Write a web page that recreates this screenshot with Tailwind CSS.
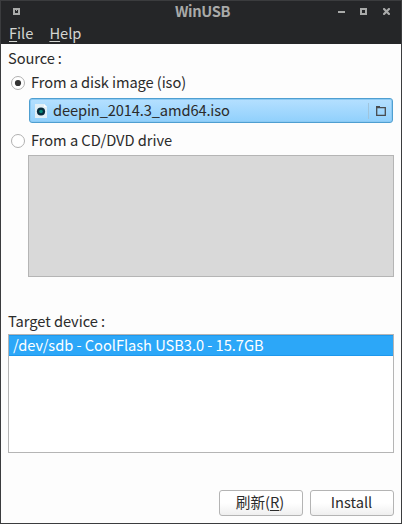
<!DOCTYPE html>
<html lang="zh-CN">
<head>
<meta charset="utf-8">
<title>WinUSB</title>
<script src="https://cdn.jsdelivr.net/npm/@tailwindcss/browser@4"></script>
</head>
<body class="overflow-hidden">
<div class="flex h-[524px] w-[402px] flex-col border border-[#3b3c3e] bg-[#fdfdfd] font-['Noto_Sans_CJK_SC',sans-serif] text-[14.67px] leading-[24px] whitespace-nowrap text-[#2b2b2b]">
  <header class="h-[43px] shrink-0 bg-[#252628]">
    <div class="flex h-[21px] items-center pl-3 pr-[11px]">
      <svg class="h-[7px] w-[7px] shrink-0" viewBox="0 0 7 7" shape-rendering="crispEdges"><path fill="#aaabaa" fill-rule="evenodd" d="M0 0h7v7H0zM2 2v3h3V2H4v1H3V2z"/></svg>
      <h1 class="ml-[155px] h-[21px] w-[60px] text-[14.67px] leading-[19px] font-bold tracking-[-0.35px] text-[#a9aaa9]">WinUSB</h1>
      <div class="ml-auto flex items-center">
        <svg class="h-[7px] w-[7px]" viewBox="0 0 7 7" shape-rendering="crispEdges"><path fill="#a9aaa9" d="M0 3h7v2H0z"/></svg>
        <svg class="ml-[15px] h-[7px] w-[7px]" viewBox="0 0 7 7" shape-rendering="crispEdges"><path fill="#a9aaa9" fill-rule="evenodd" d="M0 0h7v7H0zM2 2v3h3V2z"/></svg>
        <svg class="ml-4 h-[7px] w-[7px]" viewBox="0 0 7 7"><path stroke="#a9aaa9" stroke-width="2.2" d="M.3.3l6.4 6.4M6.7.3L.3 6.7"/></svg>
      </div>
    </div>
    <nav class="flex h-[22px] gap-4 pl-2 leading-[22px] text-[#d4d6d2]">
      <span><u class="underline-offset-2">F</u>ile</span><span><u class="underline-offset-2">H</u>elp</span>
    </nav>
  </header>
  <main class="flex flex-1 flex-col px-[7px]">
    <div class="mt-[2px] h-6 tracking-[-0.1px]">Source :</div>
    <label class="flex h-[25px] items-center pl-[3px] leading-[22px] tracking-[-0.08px]">
      <svg class="mr-[6px] h-[14px] w-[14px]" viewBox="0 0 14 14"><circle cx="7" cy="7" r="6.5" fill="#fff" stroke="#b0b0b0"/><circle cx="7" cy="7" r="3.1" fill="#333"/></svg><span class="h-6">From a disk image (iso)</span>
    </label>
    <div class="mt-[3px] ml-[21px] flex h-[25px] w-[364px] items-center rounded-[3px] border border-[#4f9fd1] bg-linear-to-b from-[#b5e0ff] to-[#90d0fc] pl-[5px] pr-[6px] shadow-[inset_0_0_0_1px_#8ccaf3]">
      <svg class="mr-[6px] h-[14px] w-[12px]" viewBox="0 0 12 14"><path fill="#e2eff6" d="M0 0h9l3 3v11H0z"/><path fill="#fff" d="M9 0v3h3z"/><circle cx="6" cy="7.5" r="4.1" fill="#092b3c"/><circle cx="6" cy="7.5" r="1.8" fill="#078a78"/></svg>
      <span class="h-6 leading-[21px] tracking-[-0.12px]">deepin_2014.3_amd64.iso</span>
      <span class="ml-auto h-4 w-px bg-[#9fc4dc]"></span>
      <svg class="ml-[7px] h-[10px] w-[10px]" viewBox="0 0 10 10"><path fill="none" stroke="#484b4e" stroke-width="1.3" d="M.7 1.7h8.6v7.6H.7z"/><path fill="#484b4e" d="M0 0h4v2H0z"/></svg>
    </div>
    <label class="mt-[5px] flex h-[25px] items-center pl-[3px] leading-[22px]">
      <svg class="mr-[6px] h-[14px] w-[14px]" viewBox="0 0 14 14"><circle cx="7" cy="7" r="6.5" fill="#fff" stroke="#b0b0b0"/></svg><span class="h-6 tracking-[-0.03px]">From a CD/DVD drive</span>
    </label>
    <div class="mt-[2px] ml-5 h-[122px] border border-[#b5b5b5] bg-[#d9d9d9]"></div>
    <div class="mt-[32px] h-6 leading-[23px] tracking-[-0.04px]">Target device :</div>
    <div class="mt-[1px] h-[119px] border border-[#b5b5b5] bg-white">
      <div class="h-[21px] border-y border-[#1d98ed] bg-[#2ca7f8] pl-1 leading-[17px] tracking-[-0.04px] text-white">/dev/sdb - CoolFlash USB3.0 - 15.7GB</div>
    </div>
    <div class="mt-[37px] flex justify-end gap-[7px]">
      <button class="flex h-[26px] w-[84px] justify-center rounded-[3px] border border-[#b4b4b4] bg-linear-to-b from-white from-50% to-[#efefef] pr-[2px] leading-[22px]">刷新(<u class="underline-offset-2">R</u>)</button>
      <button class="flex h-[26px] w-[84px] justify-center rounded-[3px] border border-[#b4b4b4] bg-linear-to-b from-white from-50% to-[#efefef] pr-[1px] leading-[22px]">Install</button>
    </div>
  </main>
</div>
</body>
</html>
